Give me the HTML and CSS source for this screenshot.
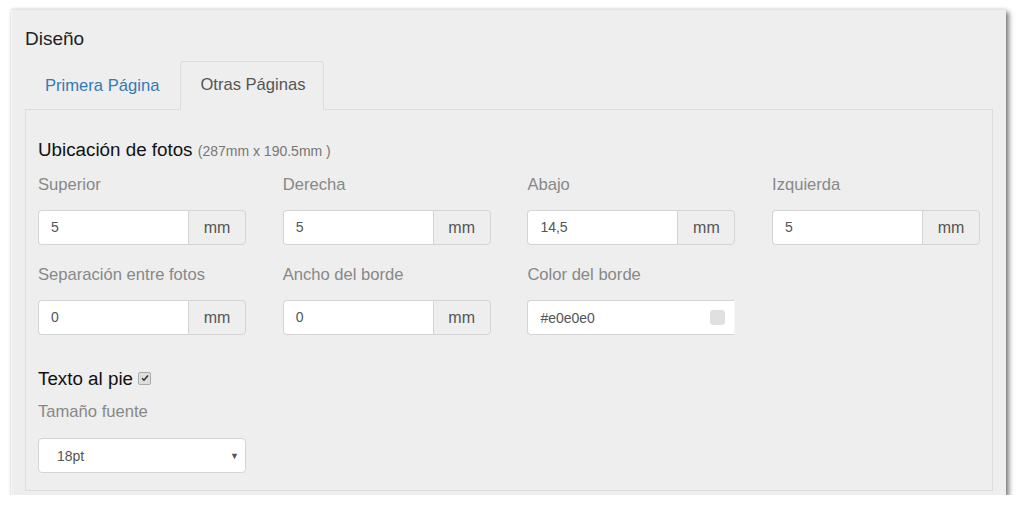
FILE: index.html
```html
<!DOCTYPE html>
<html lang="es">
<head>
<meta charset="utf-8">
<title>Diseño</title>
<link rel="stylesheet" href="styles.css">
</head>
<body>
<div class="panel">
  <h3 class="panel-title">Diseño</h3>
  <ul class="tabs">
    <li class="tab"><a href="#">Primera Página</a></li>
    <li class="tab active"><span>Otras Páginas</span></li>
  </ul>
  <div class="tab-content">
    <h4 class="section-title">Ubicación de fotos <small>(287mm x 190.5mm )</small></h4>
    <div class="grid">
      <div class="field">
        <label>Superior</label>
        <div class="input-group"><span class="input">5</span><span class="addon">mm</span></div>
      </div>
      <div class="field">
        <label>Derecha</label>
        <div class="input-group"><span class="input">5</span><span class="addon">mm</span></div>
      </div>
      <div class="field">
        <label>Abajo</label>
        <div class="input-group"><span class="input">14,5</span><span class="addon">mm</span></div>
      </div>
      <div class="field">
        <label>Izquierda</label>
        <div class="input-group"><span class="input">5</span><span class="addon">mm</span></div>
      </div>
      <div class="field row2">
        <label>Separación entre fotos</label>
        <div class="input-group"><span class="input">0</span><span class="addon">mm</span></div>
      </div>
      <div class="field row2">
        <label>Ancho del borde</label>
        <div class="input-group"><span class="input">0</span><span class="addon">mm</span></div>
      </div>
      <div class="field row2">
        <label>Color del borde</label>
        <div class="color-input"><span class="color-text">#e0e0e0</span><span class="swatch"></span></div>
      </div>
    </div>
    <h4 class="section-title footer-title">Texto al pie <span class="checkbox"><svg width="8" height="8" viewBox="0 0 8 8"><path d="M1 4.2 L3 6.2 L7 1.6" fill="none" stroke="#333" stroke-width="1.6"/></svg></span></h4>
    <label class="size-label">Tamaño fuente</label>
    <div class="select"><span>18pt</span><span class="caret">▼</span></div>
  </div>
</div>
</body>
</html>
```

FILE: styles.css
```css
html, body {
  margin: 0;
  padding: 0;
  background: #ffffff;
  font-family: "Liberation Sans", Arial, sans-serif;
}

.panel {
  margin: 9px 0 0 11px;
  width: 995px;
  height: 486px;
  box-sizing: border-box;
  background: #eeeeee;
  border-top: 1px solid #e4e4e4;
  border-left: 1px solid #f6f6f6;
  box-shadow: 3px 3px 5px rgba(0, 0, 0, 0.5), 0 0 3px rgba(0, 0, 0, 0.12);
  padding: 0 13px 0 13px;
}

.panel-title {
  margin: 0;
  padding-top: 19px;
  font-size: 19px;
  line-height: 20px;
  font-weight: normal;
  color: #222;
  height: 32px;
}

.tabs {
  list-style: none;
  margin: 0;
  padding: 0;
  display: flex;
  height: 49px;
  position: relative;
  z-index: 1;
}

.tab a,
.tab span {
  display: block;
  font-size: 16.6px;
  line-height: 22px;
  padding: 13px 19px 13px 19px;
  text-decoration: none;
}

.tab a {
  color: #337ab7;
  border: 1px solid transparent;
  padding-right: 20px;
}

.tab.active {
  background: #eeeeee;
  border: 1px solid #dddddd;
  border-bottom-color: #eeeeee;
  border-radius: 4px 4px 0 0;
  height: 49px;
  box-sizing: border-box;
}

.tab.active span {
  color: #555;
  padding-top: 12px;
  padding-right: 17px;
}

.tab-content {
  border: 1px solid #dddddd;
  margin-top: -1px;
  height: 382px;
  box-sizing: border-box;
  padding: 30px 12px 0 12px;
}

.section-title {
  margin: 0;
  font-size: 18.8px;
  line-height: 20px;
  font-weight: normal;
  color: #111;
}

.section-title small {
  font-size: 14px;
  color: #777;
}

.grid {
  display: grid;
  grid-template-columns: repeat(4, 208px);
  column-gap: 36.7px;
  margin-top: 14px;
}

.field label,
.size-label {
  display: block;
  font-size: 16.6px;
  line-height: 20px;
  color: #888;
}

.field.row2 {
  margin-top: 20px;
}

.input-group {
  display: flex;
  margin-top: 15px;
  height: 35px;
}

.input {
  flex: 1;
  background: #fff;
  border: 1px solid #d4d4d4;
  border-right: none;
  border-radius: 4px 0 0 4px;
  padding: 0 12px;
  font-size: 14px;
  line-height: 33px;
  color: #555;
}

.addon {
  width: 58px;
  box-sizing: border-box;
  background: #eeeeee;
  border: 1px solid #d4d4d4;
  border-radius: 0 4px 4px 0;
  text-align: center;
  font-size: 16px;
  line-height: 33px;
  color: #555;
}

.color-input {
  display: flex;
  align-items: center;
  justify-content: space-between;
  margin-top: 15px;
  height: 35px;
  box-sizing: border-box;
  background: #fff;
  border: 1px solid #d4d4d4;
  border-right-color: #f4f4f4;
  border-radius: 4px 0 0 4px;
  padding: 0 9px 0 12px;
}

.color-text {
  font-size: 14px;
  color: #555;
}

.swatch {
  width: 15px;
  height: 15px;
  border-radius: 3px;
  background: #e0e0e0;
}

.footer-title {
  margin-top: 34px;
  display: flex;
  align-items: center;
}

.checkbox {
  display: inline-flex;
  align-items: center;
  justify-content: center;
  width: 11px;
  height: 11px;
  margin-left: 5px;
  margin-top: -2px;
  background: #dedede;
  border: 1px solid #aaa;
  border-radius: 2px;
}

.size-label {
  margin-top: 13px;
}

.select {
  display: flex;
  justify-content: space-between;
  align-items: center;
  width: 208px;
  height: 35px;
  box-sizing: border-box;
  margin-top: 16px;
  background: #fff;
  border: 1px solid #d4d4d4;
  border-radius: 4px;
  padding: 0 6px 0 18px;
  font-size: 14px;
  color: #555;
}

.caret {
  font-size: 9px;
  color: #555;
}
```
